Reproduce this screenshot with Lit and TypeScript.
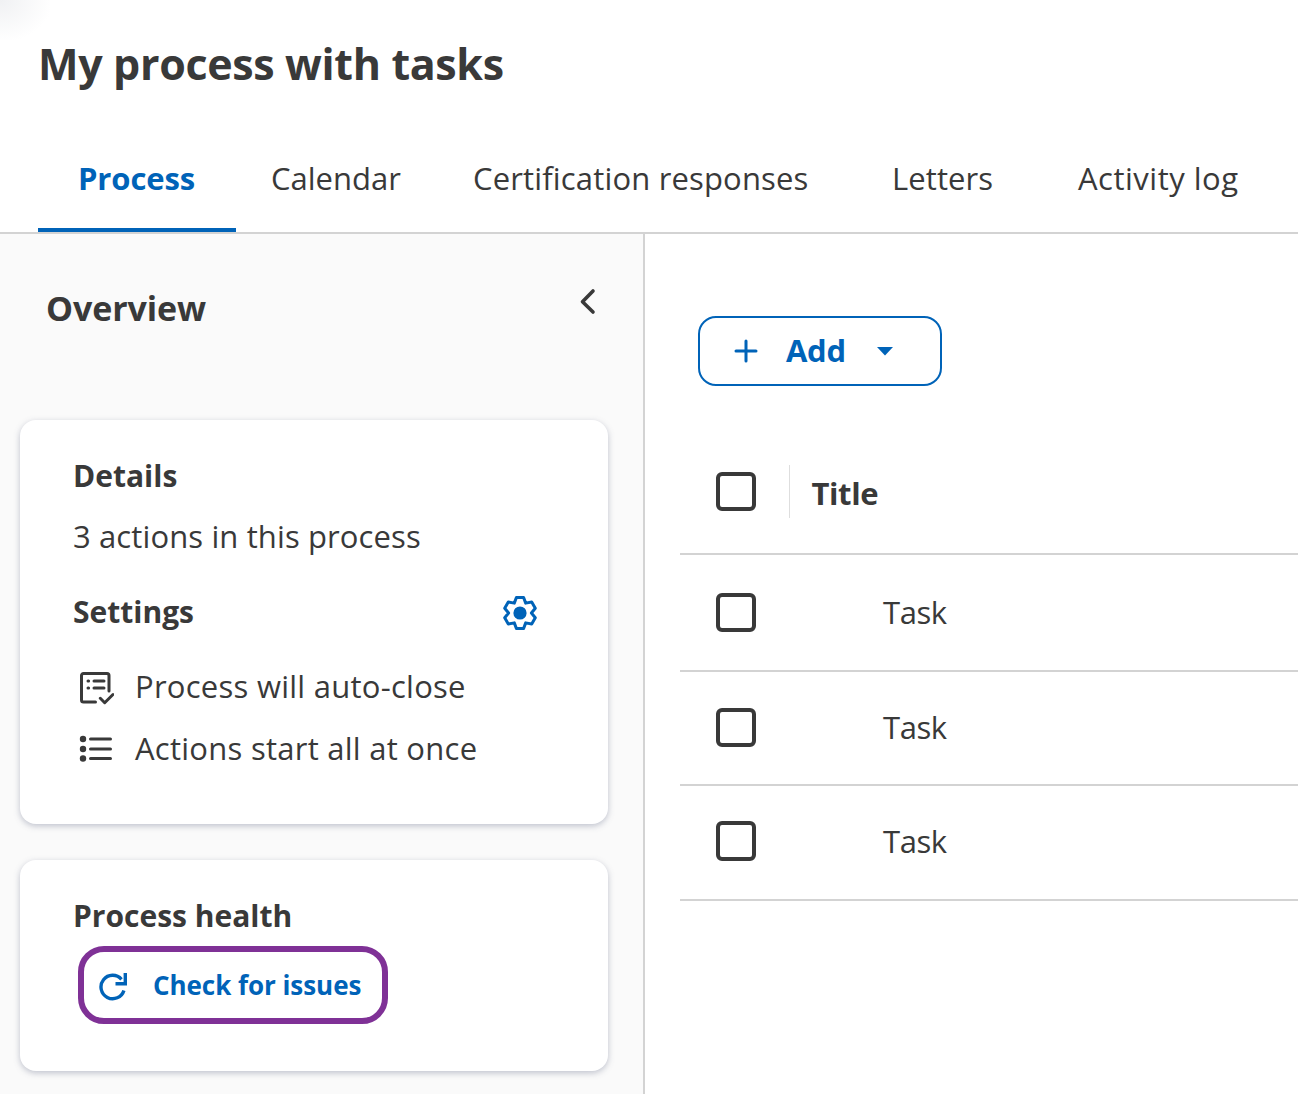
import { LitElement, html, css } from 'lit';
import { customElement } from 'lit/decorators.js';

const checkbox = html`<span class="box"></span>`;

// six toothed gear outline, teeth on top and bottom
function gearPath(cx: number, cy: number) {
  const pts: string[] = [];
  const at = (r: number, deg: number) => {
    const a = (deg * Math.PI) / 180;
    return `${(cx + r * Math.cos(a)).toFixed(2)} ${(cy + r * Math.sin(a)).toFixed(2)}`;
  };
  for (let i = 0; i < 6; i++) {
    const a = i * 60 - 90;
    pts.push(at(16, a - 13), at(16, a + 13), at(11.4, a + 30));
  }
  return `M${pts.join(' L')} Z`;
}

@customElement('app-root')
export class AppRoot extends LitElement {
  static styles = css`
    :host {
      display: block;
      position: relative;
      width: 1298px;
      height: 1094px;
      overflow: hidden;
      background: #fff;
      color: #393939;
      font-family: 'Open Sans', 'Liberation Sans', sans-serif;
      font-size: 31px;
    }
    .glow {
      position: absolute;
      left: 0;
      top: 0;
      width: 50px;
      height: 40px;
      background: radial-gradient(ellipse at top left, #f0f1f3 0%, #ffffff 75%);
    }
    header {
      box-sizing: border-box;
      height: 234px;
      padding: 35px 0 0 38px;
      border-bottom: 2px solid #d3d3d3;
    }
    h1 {
      margin: 0;
      height: 111px;
      font-size: 43px;
      line-height: 58px;
      font-weight: 700;
      letter-spacing: -0.35px;
    }
    nav {
      display: flex;
      height: 86px;
    }
    .tab {
      box-sizing: border-box;
      height: 86px;
      line-height: 64px;
      white-space: nowrap;
    }
    .tab.process {
      width: 198px;
      padding-left: 40px;
      color: #0063b8;
      font-weight: 700;
      letter-spacing: -0.1px;
      border-bottom: 4px solid #0063b8;
    }
    .tab.calendar {
      width: 202px;
      margin-left: 35px;
    }
    .tab.certification {
      width: 419px;
      letter-spacing: 0.16px;
    }
    .tab.letters {
      width: 186px;
      letter-spacing: 0.1px;
    }
    .tab.activity {
      letter-spacing: 0.5px;
    }
    .main {
      display: flex;
      height: 860px;
    }
    aside {
      box-sizing: border-box;
      width: 645px;
      background: #fafafa;
      border-right: 2px solid #d3d3d3;
      padding: 0 36px 0 20px;
    }
    .overview {
      display: flex;
      justify-content: space-between;
      height: 186px;
      padding-left: 26px;
    }
    h2 {
      margin: 50px 0 0;
      font-size: 34px;
      line-height: 48px;
      font-weight: 700;
      letter-spacing: -0.1px;
    }
    .collapse {
      width: 24px;
      height: 32px;
      margin: 52px 7px 0 0;
    }
    .card {
      box-sizing: border-box;
      width: 588px;
      background: #fff;
      border-radius: 16px;
      box-shadow: 0 2px 6px rgba(80, 90, 120, 0.35);
      padding: 0 0 0 53px;
    }
    .details {
      height: 404px;
      margin-bottom: 36px;
      padding-top: 35px;
    }
    .health {
      height: 211px;
      padding-top: 35px;
    }
    h3 {
      margin: 0;
      font-size: 30px;
      line-height: 42px;
      font-weight: 700;
    }
    .actions {
      margin: 17px 0 0;
      line-height: 44px;
      letter-spacing: 0.12px;
    }
    .settings {
      display: flex;
      justify-content: space-between;
      align-items: center;
      margin-top: 33px;
      width: 465px;
    }
    .settings svg {
      width: 36px;
      height: 36px;
    }
    .item {
      display: flex;
      align-items: center;
      gap: 21px;
      height: 62px;
      margin-left: 5px;
      letter-spacing: 0.26px;
    }
    .item svg {
      width: 36px;
      height: 36px;
      flex: none;
    }
    .item span {
      margin-top: -2px;
    }
    .settings + .item {
      margin-top: 23px;
    }
    .check {
      box-sizing: border-box;
      width: 310px;
      height: 78px;
      margin: 9px 0 0 5px;
      border: 6px solid #7f3196;
      border-radius: 26px;
      display: flex;
      align-items: center;
      gap: 23px;
      padding-left: 14px;
      color: #0063b8;
      font-size: 26px;
      font-weight: 700;
      letter-spacing: -0.05px;
      white-space: nowrap;
    }
    .check svg {
      width: 32px;
      height: 32px;
      flex: none;
    }
    section {
      flex: 1;
      padding: 82px 0 0 35px;
    }
    .add {
      box-sizing: border-box;
      width: 244px;
      height: 70px;
      margin-left: 18px;
      border: 2px solid #0063b8;
      border-radius: 18px;
      display: flex;
      align-items: center;
      padding-left: 33px;
      color: #0063b8;
      font-weight: 700;
      line-height: 64px;
      letter-spacing: -0.3px;
    }
    .add .plus {
      width: 26px;
      height: 26px;
    }
    .add .label {
      margin: -2px 0 0 27px;
    }
    .add .caret {
      width: 18px;
      height: 10px;
      margin-left: 30px;
    }
    .row {
      display: flex;
      align-items: center;
      border-bottom: 2px solid #d3d3d3;
      padding-left: 36px;
      box-sizing: border-box;
    }
    .row.head {
      height: 123px;
      margin-top: 46px;
      padding-bottom: 2px;
    }
    .row.r0 {
      height: 117px;
    }
    .row.r1 {
      height: 114px;
      padding-bottom: 1px;
    }
    .row.r2 {
      height: 115px;
      padding-bottom: 3px;
    }
    .box {
      box-sizing: border-box;
      width: 39.5px;
      height: 39.5px;
      border: 4.6px solid #393939;
      border-radius: 6px;
      flex: none;
    }
    .divider {
      width: 1px;
      height: 53px;
      background: #dedede;
      margin: 0 22px 0 33px;
    }
    .title {
      margin-top: 2px;
      font-weight: 700;
      letter-spacing: -0.4px;
    }
    .task {
      margin: -1px 0 0 127.5px;
      letter-spacing: -0.4px;
    }
  `;

  render() {
    return html`
      <div class="glow"></div>
      <header>
        <h1>My process with tasks</h1>
        <nav>
          <div class="tab process">Process</div>
          <div class="tab calendar">Calendar</div>
          <div class="tab certification">Certification responses</div>
          <div class="tab letters">Letters</div>
          <div class="tab activity">Activity log</div>
        </nav>
      </header>
      <div class="main">
        <aside>
          <div class="overview">
            <h2>Overview</h2>
            <svg class="collapse" viewBox="0 0 24 32" fill="none" stroke="#393939" stroke-width="3.6" stroke-linecap="round" stroke-linejoin="round">
              <path d="M17 5 L6.5 15.7 L17 26" />
            </svg>
          </div>
          <div class="card details">
            <h3>Details</h3>
            <div class="actions">3 actions in this process</div>
            <div class="settings">
              <h3>Settings</h3>
              <svg viewBox="0 0 36 36" fill="none" stroke="#0063b8" stroke-width="3" stroke-linejoin="round">
                <path d=${gearPath(18, 19)} />
                <circle cx="18" cy="19" r="6.6" fill="#0063b8" stroke="none" />
              </svg>
            </div>
            <div class="item">
              <svg viewBox="0 0 36 36" fill="none" stroke="#393939" stroke-width="3" stroke-linecap="round" stroke-linejoin="round">
                <path d="M17.5 33 H5.5 a2 2 0 0 1 -2 -2 V6.5 a2 2 0 0 1 2 -2 H29 a2 2 0 0 1 2 2 V22" />
                <path d="M10 12 h.6 M10 19 h.6 M16 12 h10 M16 19 h10" />
                <path d="M22.3 29.3 L26.7 33.7 L35 25.5" />
              </svg>
              <span>Process will auto-close</span>
            </div>
            <div class="item">
              <svg viewBox="0 0 36 36" fill="#393939" stroke="#393939">
                <circle cx="5" cy="8" r="3.2" stroke="none" />
                <circle cx="5" cy="18" r="3.2" stroke="none" />
                <circle cx="5" cy="27.5" r="3.2" stroke="none" />
                <path d="M12.5 8 H32.5 M12.5 18 H32.5 M12.5 27.5 H32.5" stroke-width="3" stroke-linecap="round" />
              </svg>
              <span>Actions start all at once</span>
            </div>
          </div>
          <div class="card health">
            <h3>Process health</h3>
            <div class="check">
              <svg viewBox="0 0 32 32" fill="none" stroke="#0063b8" stroke-width="3.4">
                <path d="M23.5 10.3 A11.7 11.7 0 1 0 25.9 21.4" />
                <path d="M27.3 4 V14.8 H17.5" />
              </svg>
              Check for issues
            </div>
          </div>
        </aside>
        <section>
          <div class="add">
            <svg class="plus" viewBox="0 0 26 26" stroke="#0063b8" stroke-width="3" stroke-linecap="round">
              <path d="M13 3 V23 M3 13 H23" />
            </svg>
            <span class="label">Add</span>
            <svg class="caret" viewBox="0 0 18 10" fill="#0063b8"><path d="M1 1 H17 L9 9.5 Z" /></svg>
          </div>
          <div class="row head">
            ${checkbox}
            <span class="divider"></span>
            <span class="title">Title</span>
          </div>
          ${[0, 1, 2].map((i) => html`<div class="row r${i}">${checkbox}<span class="task">Task</span></div>`)}
        </section>
      </div>
    `;
  }
}
